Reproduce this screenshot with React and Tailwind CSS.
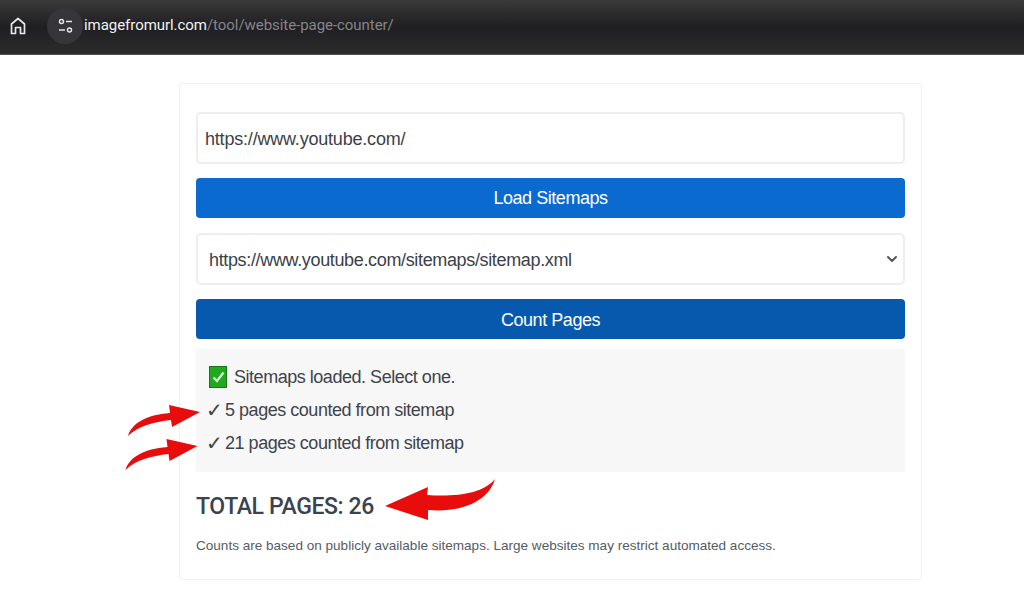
import React from 'react';
import { ChevronDown } from 'lucide-react';

const SmallArrow = ({ className }) => (
  <svg className={className} viewBox="0 0 72 31" fill="#e80c0c">
    <path d="M0 31C4 18 18 10 42 8L41 0L72 7L44 22L43 15C26 17 10 21 0 31Z" />
  </svg>
);

const CountRow = ({ text }) => (
  <div className="mt-[9px] h-[24px] flex items-center -ml-[1px]">
    <span className="w-[19px] text-[20px] tracking-normal font-['DejaVu_Sans',sans-serif]">✓</span>
    <span>{text}</span>
  </div>
);

const App = () => {
  return (
    <div className="w-[1024px] h-[597px] overflow-hidden bg-white font-['Liberation_Sans',Arial,sans-serif] text-[#212529] flex flex-col">
      {/* browser bar */}
      <div className="h-[55px] shrink-0 flex items-center pl-[10px] pb-[3px] bg-gradient-to-b from-[#3a3a3a] via-[#1f1f22] to-[#2c2c2c] border-b border-[#555]">
        <svg width="16" height="18" viewBox="0 0 16 18" fill="none" stroke="#e8e8e8" strokeWidth="1.7" strokeLinejoin="round">
          <path d="M1.5 16.5V7L8 1.5L14.5 7V16.5H10.5V10.5H5.5V16.5Z" />
        </svg>
        <div className="ml-[21px] w-[36px] h-[36px] rounded-full bg-[#35353a] flex items-center justify-center">
          <svg width="15" height="16" viewBox="0 0 15 16" fill="none" stroke="#e4e4e4" strokeWidth="1.5">
            <circle cx="3.5" cy="3.5" r="2" />
            <path d="M8 3.5H14" />
            <path d="M1 12H7" />
            <circle cx="11.5" cy="12" r="2" />
          </svg>
        </div>
        <div className="ml-[1px] text-[15px] tracking-[-0.05px] font-['Roboto',sans-serif] text-[#f2f2f2]">
          imagefromurl.com<span className="text-[#85858a]">/tool/website-page-counter/</span>
        </div>
      </div>

      {/* card */}
      <div className="relative ml-[179px] mt-[28px] w-[743px] h-[497px] border border-[#f0f0f0] rounded-[3px] px-[16px] pt-[28px]">
        <div className="h-[52px] border-2 border-[#eeeeee] rounded-[5px] flex items-center pl-[7px] pt-[3px] text-[18px] tracking-[-0.2px] text-[#3c4148]">
          https://www.youtube.com/
        </div>
        <div className="mt-[14px] h-[40px] pt-[1px] bg-[#0b6ad0] rounded-[4px] flex items-center justify-center text-white text-[18px] tracking-[-0.45px]">
          Load Sitemaps
        </div>
        <div className="mt-[15px] h-[52px] border-2 border-[#eeeeee] rounded-[5px] flex items-center justify-between pl-[11px] pr-[3px] text-[18px] tracking-[-0.35px] text-[#3c4148]">
          <span className="pt-[3px]">https://www.youtube.com/sitemaps/sitemap.xml</span>
          <ChevronDown size={16} strokeWidth={3} className="text-[#555] -mt-[1px]" />
        </div>
        <div className="mt-[14px] h-[40px] pt-[3px] bg-[#0759ad] rounded-[4px] flex items-center justify-center text-white text-[18px] tracking-[-0.45px]">
          Count Pages
        </div>

        <div className="mt-[10px] h-[123px] bg-[#f7f7f8] pl-[11px] pt-[16px] text-[18px] tracking-[-0.47px] text-[#3f444b]">
          <div className="h-[24px] flex items-center gap-[7px] pl-[2px]">
            <span className="w-[18px] h-[22px] bg-[#21a81f] border border-[#14781a] flex items-center justify-center">
              <svg width="13" height="12" viewBox="0 0 13 12" fill="none" stroke="#d8f5c8" strokeWidth="2.2">
                <path d="M1.5 6.5L5 10L11.5 1.5" />
              </svg>
            </span>
            <span>Sitemaps loaded. Select one.</span>
          </div>
          <CountRow text="5 pages counted from sitemap" />
          <CountRow text="21 pages counted from sitemap" />
        </div>

        <div className="mt-[20px] text-[23px] leading-[30px] tracking-[-0.4px] font-medium font-['Roboto',sans-serif] text-[#3b4350]">TOTAL PAGES: 26</div>
        <div className="mt-[15px] text-[13.56px] leading-[18px] text-[#555c64]">
          Counts are based on publicly available sitemaps. Large websites may restrict automated access.
        </div>

        {/* annotation arrows */}
        <SmallArrow className="absolute left-[-52px] top-[321px] w-[72px] h-[31px]" />
        <SmallArrow className="absolute left-[-55px] top-[355px] w-[73px] h-[31px]" />
        <svg className="absolute left-[205px] top-[394px] w-[110px] h-[42px]" viewBox="0 0 110 42" fill="#e80c0c">
          <path d="M0 28L43 9L42 17C70 19 98 16 110 1C104 22 78 35 43 32L43 42Z" />
        </svg>
      </div>
    </div>
  );
};

export default App;
